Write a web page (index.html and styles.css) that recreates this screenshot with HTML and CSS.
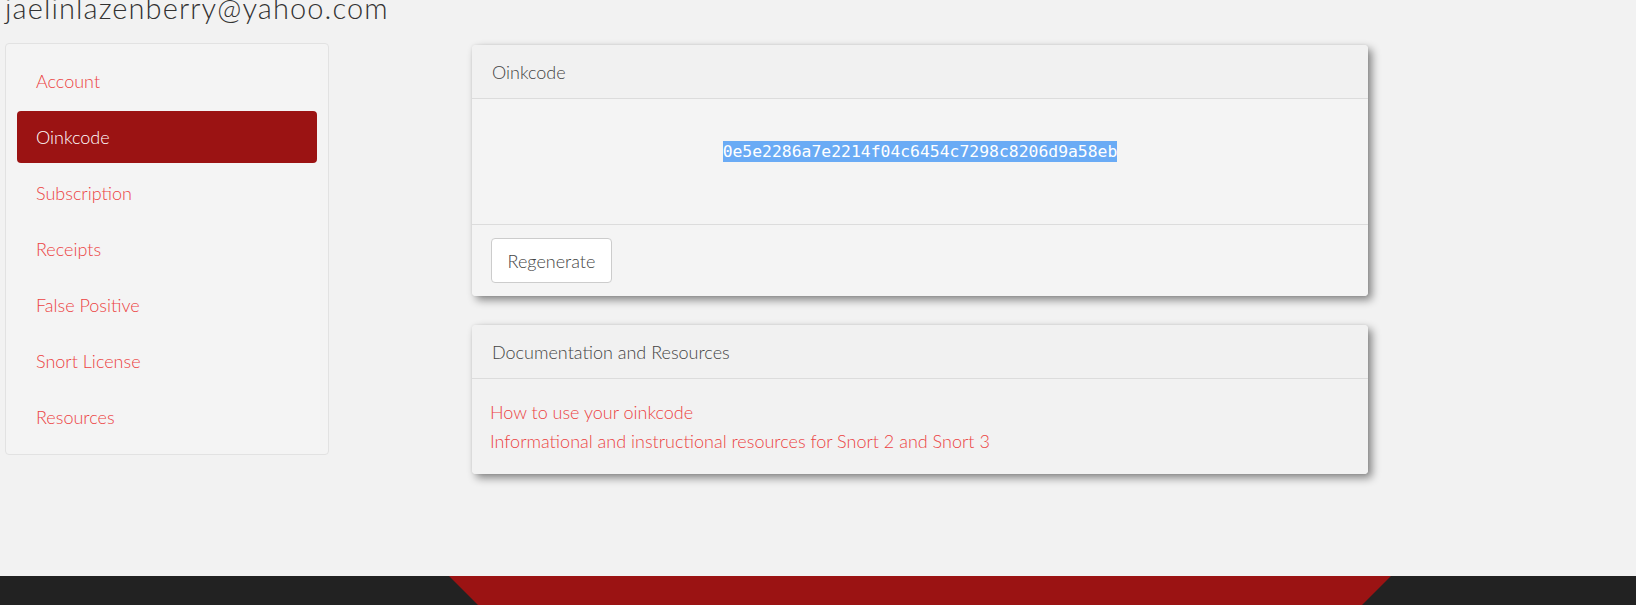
FILE: index.html
```html
<!DOCTYPE html>
<html lang="en">
<head>
<meta charset="utf-8">
<title>Oinkcode</title>
<link rel="stylesheet" href="styles.css">
</head>
<body>
<div class="page">
  <div class="user-email">jaelinlazenberry@yahoo.com</div>
  <div class="content">
    <nav class="sidebar">
      <a class="nav-item" href="#">Account</a>
      <a class="nav-item active" href="#">Oinkcode</a>
      <a class="nav-item" href="#">Subscription</a>
      <a class="nav-item" href="#">Receipts</a>
      <a class="nav-item" href="#">False Positive</a>
      <a class="nav-item" href="#">Snort License</a>
      <a class="nav-item" href="#">Resources</a>
    </nav>
    <main class="main">
      <section class="card">
        <div class="card-header">Oinkcode</div>
        <div class="card-body code-body">
          <span class="code">0e5e2286a7e2214f04c6454c7298c8206d9a58eb</span>
        </div>
        <div class="card-footer">
          <button class="btn" type="button">Regenerate</button>
        </div>
      </section>
      <section class="card">
        <div class="card-header">Documentation and Resources</div>
        <div class="card-body links-body">
          <a class="doc-link" href="#">How to use your oinkcode</a>
          <a class="doc-link" href="#">Informational and instructional resources for Snort 2 and Snort 3</a>
        </div>
      </section>
    </main>
  </div>
  <footer class="footer">
    <div class="footer-band"></div>
  </footer>
</div>
</body>
</html>
```

FILE: styles.css
```css
* { box-sizing: border-box; }

html, body {
  margin: 0;
  padding: 0;
  background: #f2f2f2;
  overflow: hidden;
}

body {
  font-family: "Lato", "Open Sans", sans-serif;
  font-weight: 300;
  color: #555;
}

.page {
  display: flex;
  flex-direction: column;
}

.user-email {
  margin-top: -9px;
  padding-left: 5px;
  font-size: 29px;
  line-height: 34px;
  letter-spacing: 1.1px;
  color: #333;
  height: 26px;
}

.content {
  display: flex;
  align-items: flex-start;
  margin-top: 26px;
}

.sidebar {
  display: flex;
  flex-direction: column;
  gap: 4px;
  margin-left: 5px;
  width: 324px;
  padding: 11px;
  background: #f4f4f4;
  border: 1px solid #e2e2e2;
  border-radius: 4px;
}

.nav-item {
  display: flex;
  align-items: center;
  height: 52px;
  padding-left: 19px;
  font-size: 18px;
  color: #ec4343;
  text-decoration: none;
  border-radius: 4px;
}

.nav-item.active {
  background: #9b1313;
  color: #fff;
}

.main {
  display: flex;
  flex-direction: column;
  gap: 29px;
  margin-left: 143px;
  width: 896px;
  margin-top: 2px;
}

.card {
  background: #f3f3f3;
  border-radius: 4px;
  box-shadow: 4px 4px 9px rgba(0, 0, 0, 0.45), 0 0 3px rgba(0, 0, 0, 0.08);
}

.card-header {
  height: 54px;
  display: flex;
  align-items: center;
  padding-left: 20px;
  font-size: 18px;
  color: #444;
  background: #f1f1f1;
  border-bottom: 1px solid #dcdcdc;
  border-radius: 4px 4px 0 0;
}

.card-body {
  background: #f4f4f4;
}

.code-body {
  height: 125px;
  padding-top: 42px;
  text-align: center;
}

.code {
  font-family: "DejaVu Sans Mono", "Liberation Mono", monospace;
  font-weight: 400;
  font-size: 16.4px;
  line-height: 21px;
  display: inline-block;
  background: #6aabf5;
  color: #fff;
}

.card-footer {
  height: 72px;
  display: flex;
  align-items: center;
  padding-left: 19px;
  background: #f4f4f4;
  border-top: 1px solid #dcdcdc;
  border-radius: 0 0 4px 4px;
}

.btn {
  width: 121px;
  height: 45px;
  font-family: inherit;
  font-weight: 300;
  font-size: 18px;
  color: #444;
  background: #fff;
  border: 1px solid #cccccc;
  border-radius: 4px;
  padding: 0;
}

.links-body {
  display: flex;
  flex-direction: column;
  padding: 19px 18px 18px;
  background: #f2f2f2;
  border-radius: 0 0 4px 4px;
}

.doc-link {
  font-size: 18px;
  line-height: 29px;
  color: #ec4343;
  text-decoration: none;
}

.footer {
  margin-top: 102px;
  height: 80px;
  background: #222222;
  display: flex;
}

.footer-band {
  margin-left: 449px;
  width: 942px;
  height: 80px;
  background: #9b1313;
  clip-path: polygon(0 0, 100% 0, calc(100% - 80px) 100%, 80px 100%);
}
```
